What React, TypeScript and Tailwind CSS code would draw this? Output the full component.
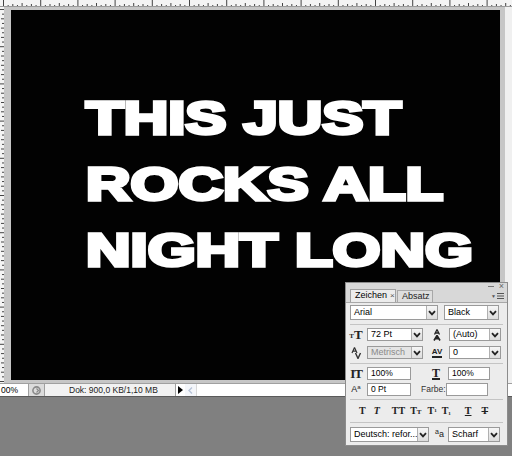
import type { ReactNode } from 'react'

const UI_FONT = 'font-[Tahoma,"Liberation_Sans",Arial,sans-serif]'

function Chevron() {
  return (
    <svg width="8" height="6" viewBox="0 0 8 6" className="block">
      <path d="M1 1.2 L4 4.4 L7 1.2" fill="none" stroke="#222" strokeWidth="1.8" />
    </svg>
  )
}

function DropButton() {
  return (
    <div className="flex w-[11px] items-center justify-center border-l border-[#b0b0b0] bg-gradient-to-b from-[#f6f6f6] to-[#dcdcdc]">
      <Chevron />
    </div>
  )
}

function Select({ label, w, h = 'h-[15px]', dim = false }: { label: string; w: string; h?: string; dim?: boolean }) {
  return (
    <div className={`flex ${h} ${w} border border-[#9a9a9a] ${dim ? 'bg-[#e4e4e4]' : 'bg-white'}`}>
      <div
        className={`flex flex-1 items-center overflow-hidden whitespace-nowrap pl-[3px] text-[9px] leading-none ${dim ? 'text-[#8a8a8a]' : 'text-black'}`}
      >
        {label}
      </div>
      <DropButton />
    </div>
  )
}

function Field({ label, w }: { label: string; w: string }) {
  return (
    <div className={`h-[13px] ${w} border border-[#9a9a9a] bg-white pl-[3px] text-[8.5px] leading-[11px] text-black`}>
      {label}
    </div>
  )
}

function Icon({ children, w = 'w-[12px]' }: { children: ReactNode; w?: string }) {
  return (
    <div className={`flex h-[13px] ${w} items-center justify-center font-['Liberation_Serif',serif] font-bold leading-none text-[#222]`}>
      {children}
    </div>
  )
}

function Ruler() {
  const ticks = []
  for (let i = 0; i < 110; i++) {
    const x = 3 + i * 4.65
    const h = i % 8 === 0 ? 7 : i % 4 === 0 ? 4 : i % 2 === 0 ? 3 : 2
    ticks.push(<rect key={i} x={x} y={7 - h} width="1" height={h} fill="#444" />)
  }
  return (
    <svg width="512" height="7" className="block bg-[#f4f4f4]">
      {ticks}
      <rect x="0" y="6" width="512" height="1" fill="#9a9a9a" />
    </svg>
  )
}

function SideRuler() {
  const ticks = []
  for (let i = 0; i < 82; i++) {
    const y = 2 + i * 4.65
    const w = i % 8 === 0 ? 4 : i % 2 === 0 ? 3 : 2
    ticks.push(<rect key={i} x={4 - w} y={y} width={w} height="1" fill="#444" />)
  }
  return (
    <svg width="4" height="376" className="block bg-[#f4f4f4]">
      {ticks}
    </svg>
  )
}

function CharacterPanel() {
  return (
    <div className={`absolute left-[345px] top-[282px] h-[164px] w-[163px] border border-[#8c8c8c] bg-[#ececec] ${UI_FONT}`}>
      {/* title strip */}
      <div className="flex h-[6px] items-center justify-end gap-[5px] bg-[#d8d8d8] pr-[3px] text-[8px] leading-none text-[#666]">
        <span className="mt-[1px] block h-[1px] w-[6px] bg-[#777]" />
        <span className="text-[9px]">×</span>
      </div>
      {/* tabs */}
      <div className="flex h-[14px] items-end border-b border-[#a8a8a8] bg-[#d8d8d8] pl-[4px]">
        <div className="flex h-[13px] w-[46px] items-center gap-[3px] border border-b-0 border-[#a0a0a0] bg-[#ececec] pl-[4px] text-[9px] text-black">
          Zeichen <span className="text-[8px] text-[#555]">×</span>
        </div>
        <div className="ml-[1px] flex h-[12px] w-[36px] items-center border border-b-0 border-[#a8a8a8] bg-[#dedede] pl-[4px] text-[9px] text-[#222]">
          Absatz
        </div>
        <div className="mb-[2px] ml-auto mr-[3px] flex items-center gap-[1px] text-[#555]">
          <span className="text-[5px]">▼</span>
          <svg width="7" height="6" viewBox="0 0 7 6">
            <rect y="0" width="7" height="1" fill="#555" />
            <rect y="2.5" width="7" height="1" fill="#555" />
            <rect y="5" width="7" height="1" fill="#555" />
          </svg>
        </div>
      </div>

      <div className="px-[4px]">
        {/* font family / style */}
        <div className="mt-[2px] flex gap-[6px]">
          <Select label="Arial" w="w-[88px]" />
          <Select label="Black" w="w-[55px]" />
        </div>
        <div className="mt-[4px] h-[1px] bg-[#c4c4c4]" />

        {/* size / leading */}
        <div className="mt-[3px] flex h-[13px] items-center">
          <Icon>
            <span className="mt-[3px] text-[7px]">T</span>
            <span className="text-[13px]">T</span>
          </Icon>
          <div className="ml-[5px]">
            <Select label="72 Pt" w="w-[56px]" h="h-[13px]" />
          </div>
          <Icon w="w-[16px] ml-[6px]">
            <svg width="10" height="12" viewBox="0 0 10 12">
              <path d="M5 0.5 L2.5 5.5 M5 0.5 L7.5 5.5 M3.3 4 H6.7" stroke="#222" strokeWidth="1.3" fill="none" />
              <path d="M5 6.5 L2 11.5 M5 6.5 L8 11.5 M3 9.8 H7" stroke="#222" strokeWidth="1.6" fill="none" />
            </svg>
          </Icon>
          <div className="ml-[4px]">
            <Select label="(Auto)" w="w-[52px]" h="h-[13px]" />
          </div>
        </div>

        {/* kerning / tracking */}
        <div className="mt-[5px] flex h-[13px] items-center">
          <Icon>
            <svg width="11" height="12" viewBox="0 0 11 12">
              <path d="M3.5 0.5 L1 6 M3.5 0.5 L6 6 M1.8 4.2 H5.2" stroke="#333" strokeWidth="1.2" fill="none" />
              <path d="M4.5 6 L7 11.5 L9.5 6" stroke="#333" strokeWidth="1.4" fill="none" />
            </svg>
          </Icon>
          <div className="ml-[5px]">
            <Select label="Metrisch" w="w-[56px]" h="h-[13px]" dim />
          </div>
          <Icon w="w-[16px] ml-[6px]">
            <span className="border-b-2 border-[#222] pb-[1px] font-['Liberation_Sans',sans-serif] text-[8px] leading-[7px]">AV</span>
          </Icon>
          <div className="ml-[4px]">
            <Select label="0" w="w-[52px]" h="h-[13px]" />
          </div>
        </div>
        <div className="mt-[4px] h-[1px] bg-[#c4c4c4]" />

        {/* vertical / horizontal scale */}
        <div className="mt-[3px] flex h-[13px] items-center">
          <Icon>
            <span className="text-[13px] tracking-[-1px]">IT</span>
          </Icon>
          <div className="ml-[5px]">
            <Field label="100%" w="w-[44px]" />
          </div>
          <Icon w="w-[16px] ml-[17px]">
            <span className="border-b-2 border-[#222] text-[12px] leading-[10px]">T</span>
          </Icon>
          <div className="ml-[4px]">
            <Field label="100%" w="w-[42px]" />
          </div>
        </div>

        {/* baseline / colour */}
        <div className="mt-[3px] flex h-[13px] items-center">
          <Icon>
            <span className="font-['Liberation_Sans',sans-serif] text-[9px] font-normal">
              A<sup className="text-[6px]">a</sup>
            </span>
          </Icon>
          <div className="ml-[5px]">
            <Field label="0 Pt" w="w-[44px]" />
          </div>
          <div className="ml-[10px] w-[24px] text-[8.5px] leading-[13px] text-[#333]">Farbe:</div>
          <div className="ml-[1px] h-[13px] w-[42px] border border-[#9a9a9a] bg-white" />
        </div>
        <div className="mt-[3px] h-[1px] bg-[#c4c4c4]" />

        {/* style buttons */}
        <div className="mt-[6px] flex h-[10px] items-center font-['Liberation_Serif',serif] text-[10px] font-bold leading-none text-[#222]">
          <span className="ml-[9px]">T</span>
          <span className="ml-[8px] italic">T</span>
          <span className="ml-[12px]">TT</span>
          <span className="ml-[5px]">
            T<span className="text-[7px]">T</span>
          </span>
          <span className="ml-[6px]">
            T<sup className="text-[5px]">1</sup>
          </span>
          <span className="ml-[5px]">
            T<sub className="text-[5px]">1</sub>
          </span>
          <span className="ml-[14px] underline">T</span>
          <span className="ml-[10px] line-through">T</span>
        </div>
        <div className="mt-[6px] h-[1px] bg-[#c4c4c4]" />

        {/* language / anti-alias */}
        <div className="mt-[4px] flex items-center">
          <Select label="Deutsch: refor..." w="w-[79px]" />
          <div className="ml-[6px] w-[12px] font-['Liberation_Sans',sans-serif] text-[9px] leading-none text-[#222]">
            <sup className="text-[7px]">a</sup>a
          </div>
          <div className="ml-[1px]">
            <Select label="Scharf" w="w-[52px]" />
          </div>
        </div>
      </div>
    </div>
  )
}

export default function App() {
  return (
    <div className="relative h-[456px] w-[512px] overflow-hidden bg-[#808080]">
      {/* document window */}
      <div className="flex h-[397px] flex-col border-b border-[#5a5a5a] bg-[#c6c6c6]">
        <Ruler />
        <div className="flex">
          <SideRuler />
          <div className="pl-[7px] pt-[3px]">
            <div className="h-[370px] w-[489px] bg-[#020202] pl-[75px] pt-[75px]">
              <div className="origin-left scale-x-[1.34] font-['Liberation_Sans',Arial,sans-serif] text-[46px] font-bold leading-[66px] text-white [-webkit-text-stroke:3.5px_white]">
                <div>THIS JUST</div>
                <div>ROCKS ALL</div>
                <div>NIGHT LONG</div>
              </div>
            </div>
          </div>
          <div className="ml-[5px] h-[376px] flex-1 bg-[#f0f0f0]" />
        </div>
        {/* status bar */}
        <div className={`mt-auto flex h-[13px] items-stretch border-t border-[#a0a0a0] bg-white text-[8.5px] leading-[12px] text-black ${UI_FONT}`}>
          <div className="w-[29px] border-r border-[#a0a0a0] pl-[1px]">00%</div>
          <div className="flex w-[16px] items-center justify-center border-r border-[#a0a0a0] bg-[#dcdcdc]">
            <svg width="9" height="9" viewBox="0 0 9 9">
              <circle cx="4.5" cy="4.5" r="3.6" fill="none" stroke="#8a8a8a" strokeWidth="1.6" />
              <path d="M4.5 2.5 L6.5 4.5 L4.5 6.5" fill="none" stroke="#8a8a8a" strokeWidth="1.2" />
            </svg>
          </div>
          <div className="w-[131px] border-r border-[#a0a0a0] bg-[#f2f2f2] pl-[24px] text-[#222]">Dok: 900,0 KB/1,10 MB</div>
          <div className="flex w-[9px] items-center justify-center">
            <svg width="5" height="8" viewBox="0 0 5 8">
              <path d="M0 0 L5 4 L0 8 Z" fill="#000" />
            </svg>
          </div>
          <div className="flex w-[12px] items-center justify-center border-r border-[#d8d8d8] bg-[#f4f6fa]">
            <svg width="5" height="7" viewBox="0 0 5 7">
              <path d="M4 0.5 L1 3.5 L4 6.5" fill="none" stroke="#b8c4d8" strokeWidth="1.4" />
            </svg>
          </div>
          <div className="flex-1 bg-white" />
        </div>
      </div>

      <CharacterPanel />
    </div>
  )
}
